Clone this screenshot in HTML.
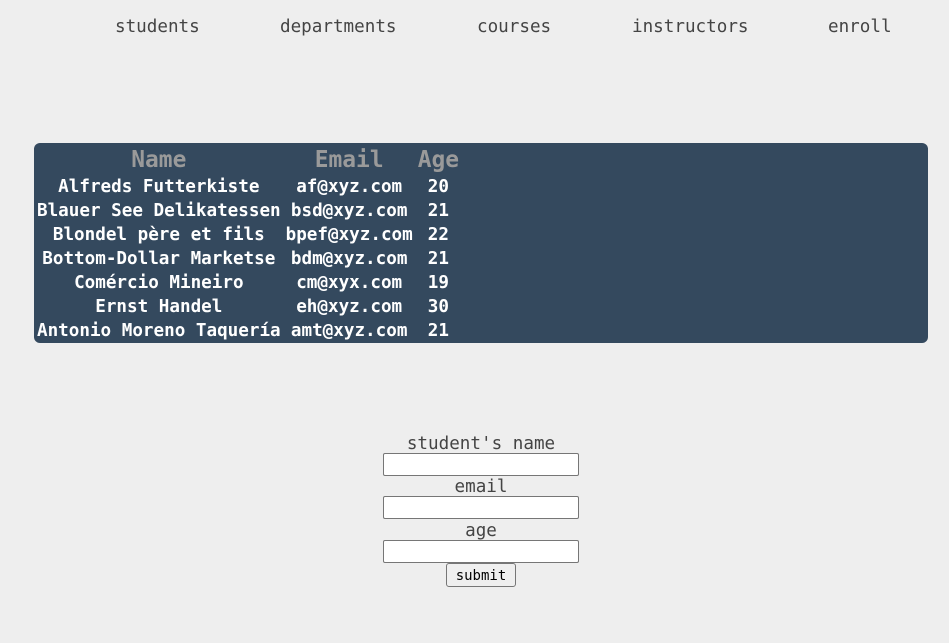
<!DOCTYPE html>
<html><head><meta charset="utf-8"><style>
html,body{margin:0;padding:0;background:#eeeeee;width:949px;height:643px;overflow:hidden;font-family:"DejaVu Sans Mono","Liberation Mono",monospace;}
.nav a{position:absolute;top:15px;font-size:17.6px;color:#444;text-decoration:none;line-height:24px;}
.box{position:absolute;left:34px;top:143px;width:894px;height:200px;background:#34495e;border-radius:6px;}
table{position:absolute;left:0.5px;top:4px;border-collapse:collapse;}
td,th{padding:0 2.5px;text-align:center;white-space:nowrap;}
th{font-size:22.88px;color:#9a9a9a;height:28px;line-height:26px;font-weight:bold;vertical-align:top;}
td{font-size:17.6px;color:#fff;font-weight:bold;height:24px;line-height:24px;}
.lbl{position:absolute;left:0;width:962px;text-align:center;font-size:17.6px;color:#444;line-height:20px;}
input.t{position:absolute;left:383px;width:196px;height:23px;box-sizing:border-box;border:1px solid #767676;border-radius:2px;background:#fff;margin:0;padding:0;}
.btn{position:absolute;left:446px;top:563px;width:70px;height:24px;box-sizing:border-box;border:1px solid #767676;border-radius:3px;background:#efefef;font-family:"DejaVu Sans Mono",monospace;font-size:14px;color:#000;padding:2px 0 0 0;margin:0;}
</style></head><body>
<div class="nav">
<a style="left:115px">students</a>
<a style="left:280px">departments</a>
<a style="left:477px">courses</a>
<a style="left:632px">instructors</a>
<a style="left:828px">enroll</a>
</div>
<div class="box"><table>
<tr><th>Name</th><th>Email</th><th>Age</th></tr>
<tr><td>Alfreds Futterkiste</td><td>af@xyz.com</td><td>20</td></tr>
<tr><td>Blauer See Delikatessen</td><td>bsd@xyz.com</td><td>21</td></tr>
<tr><td>Blondel père et fils</td><td>bpef@xyz.com</td><td>22</td></tr>
<tr><td>Bottom-Dollar Marketse</td><td>bdm@xyz.com</td><td>21</td></tr>
<tr><td>Comércio Mineiro</td><td>cm@xyx.com</td><td>19</td></tr>
<tr><td>Ernst Handel</td><td>eh@xyz.com</td><td>30</td></tr>
<tr><td>Antonio Moreno Taquería</td><td>amt@xyz.com</td><td>21</td></tr>
</table></div>
<div class="lbl" style="top:434px">student's name</div>
<input class="t" style="top:453px">
<div class="lbl" style="top:477px">email</div>
<input class="t" style="top:496px">
<div class="lbl" style="top:521px">age</div>
<input class="t" style="top:540px">
<button class="btn">submit</button>
</body></html>
